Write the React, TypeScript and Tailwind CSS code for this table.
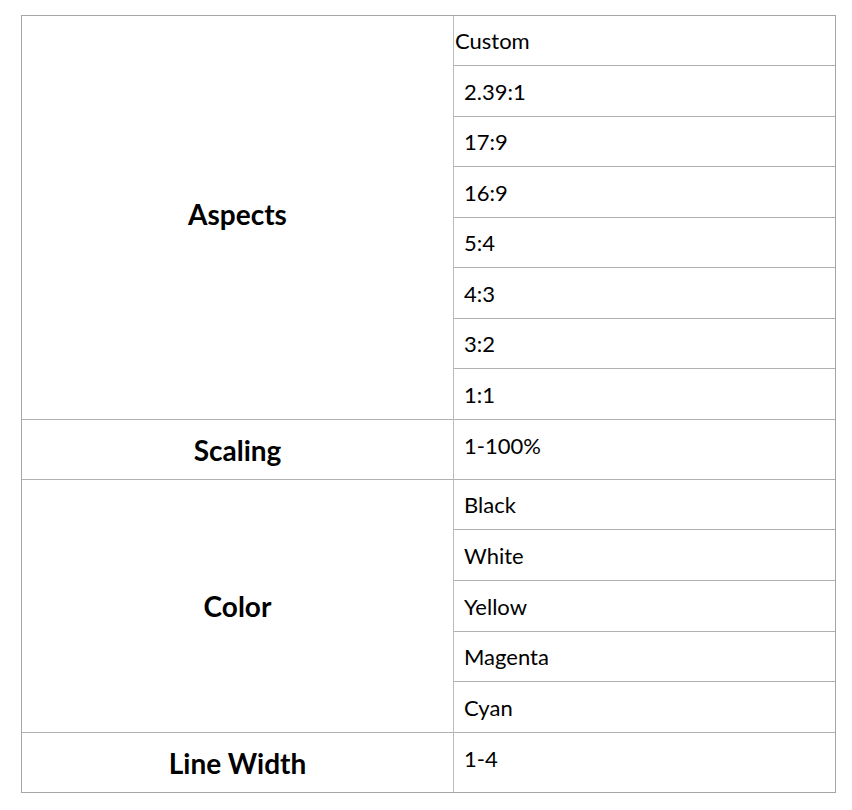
const groups: { label: string; items: string[]; heights: number[] }[] = [
  {
    label: "Aspects",
    items: ["Custom", "2.39:1", "17:9", "16:9", "5:4", "4:3", "3:2", "1:1"],
    heights: [49, 51, 50, 51, 50, 51, 50, 51],
  },
  { label: "Scaling", items: ["1-100%"], heights: [60] },
  {
    label: "Color",
    items: ["Black", "White", "Yellow", "Magenta", "Cyan"],
    heights: [50, 51, 51, 50, 51],
  },
  { label: "Line Width", items: ["1-4"], heights: [60] },
]

export default function App() {
  return (
    <div className="w-[852px] h-[810px] bg-white pl-[21px] pt-[15px] font-['Lato',sans-serif] text-black">
      <div className="w-[815px] border border-[#a6a6a6]">
        {groups.map((g, gi) => (
          <div key={g.label} className="flex">
            <div
              className={`w-[432px] shrink-0 border-r border-[#bcbcbc] flex items-center justify-center text-[28px] font-bold ${gi > 0 ? "border-t border-t-[#b0b0b0]" : "pb-[8px]"}`}
            >
              {g.label}
            </div>
            <div className="flex-1 flex flex-col">
              {g.items.map((it, i) => (
                <div
                  key={it}
                  style={{ height: g.heights[i] }}
                  className={`flex text-[22px] ${gi > 0 || i > 0 ? "border-t border-[#b0b0b0]" : ""} ${it === "Custom" ? "pl-[1px]" : "pl-[10px]"} ${g.items.length === 1 ? "items-start pt-[9px]" : "items-center"}`}
                >
                  {it}
                </div>
              ))}
            </div>
          </div>
        ))}
      </div>
    </div>
  )
}
